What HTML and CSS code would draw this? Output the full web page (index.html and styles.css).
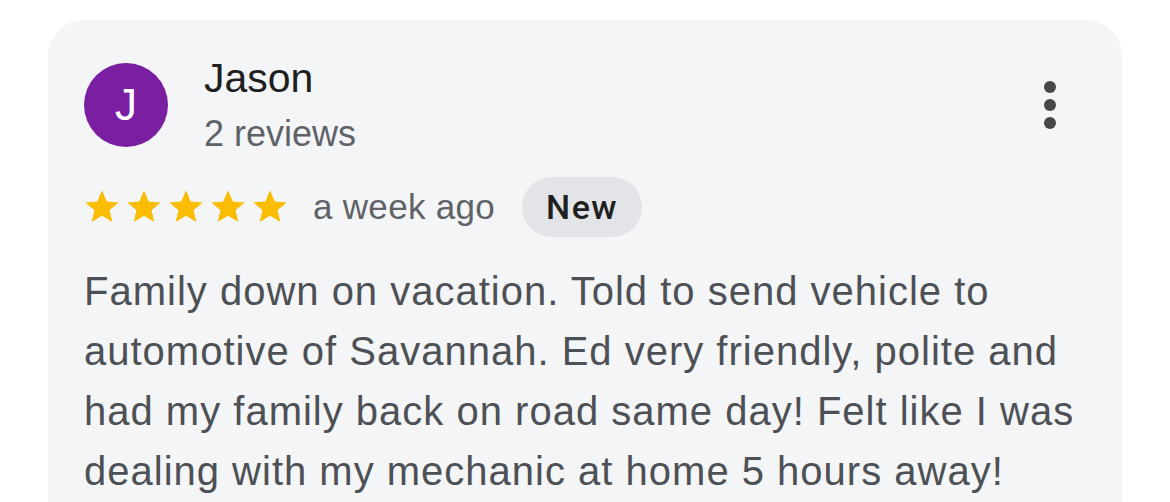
FILE: index.html
```html
<!DOCTYPE html>
<html lang="en">
<head>
<meta charset="utf-8">
<title>Review</title>
<link rel="stylesheet" href="styles.css">
</head>
<body>
<div class="card">
  <div class="header">
    <div class="avatar">J</div>
    <div class="who">
      <div class="name">Jason</div>
      <div class="count">2 reviews</div>
    </div>
    <svg class="kebab" width="24" height="48" viewBox="0 0 24 48" aria-hidden="true">
      <circle cx="12" cy="6" r="6"/>
      <circle cx="12" cy="24" r="6"/>
      <circle cx="12" cy="42" r="6"/>
    </svg>
  </div>
  <div class="meta">
    <div class="stars">
      <svg class="star" viewBox="0 0 24 24"><path d="M12 17.27L18.18 21l-1.64-7.03L22 9.24l-7.19-.61L12 2 9.19 8.63 2 9.24l5.46 4.73L5.82 21z"/></svg>
      <svg class="star" viewBox="0 0 24 24"><path d="M12 17.27L18.18 21l-1.64-7.03L22 9.24l-7.19-.61L12 2 9.19 8.63 2 9.24l5.46 4.73L5.82 21z"/></svg>
      <svg class="star" viewBox="0 0 24 24"><path d="M12 17.27L18.18 21l-1.64-7.03L22 9.24l-7.19-.61L12 2 9.19 8.63 2 9.24l5.46 4.73L5.82 21z"/></svg>
      <svg class="star" viewBox="0 0 24 24"><path d="M12 17.27L18.18 21l-1.64-7.03L22 9.24l-7.19-.61L12 2 9.19 8.63 2 9.24l5.46 4.73L5.82 21z"/></svg>
      <svg class="star" viewBox="0 0 24 24"><path d="M12 17.27L18.18 21l-1.64-7.03L22 9.24l-7.19-.61L12 2 9.19 8.63 2 9.24l5.46 4.73L5.82 21z"/></svg>
    </div>
    <span class="when">a week ago</span>
    <span class="chip">New</span>
  </div>
  <p class="text">Family down on vacation. Told to send vehicle to automotive of Savannah. Ed very friendly, polite and had my family back on road same day! Felt like I was dealing with my mechanic at home 5 hours away!</p>
</div>
</body>
</html>
```

FILE: styles.css
```css
* { box-sizing: border-box; }
html, body {
  margin: 0;
  padding: 0;
  background: #ffffff;
  overflow: hidden;
}
body {
  font-family: "Liberation Sans", Arial, sans-serif;
  height: 502px;
}
.card {
  margin: 20px 0 0 48px;
  width: 1074px;
  height: 600px;
  padding: 34px 36px 0 36px;
  background: #f4f5f7;
  border-radius: 36px 36px 0 0;
}
.header {
  display: flex;
  align-items: flex-start;
}
.avatar {
  width: 84px;
  height: 84px;
  margin-top: 9px;
  border-radius: 50%;
  background: #7b1fa2;
  color: #ffffff;
  font-size: 44px;
  line-height: 84px;
  text-align: center;
  flex: none;
}
.who {
  margin-left: 36px;
}
.name {
  font-size: 41px;
  line-height: 48px;
  color: #1f1f1f;
}
.count {
  margin-top: 10px;
  font-size: 36px;
  line-height: 44px;
  color: #5f6368;
}
.kebab {
  margin-left: auto;
  margin-right: 24px;
  margin-top: 27px;
  fill: #474747;
  flex: none;
}
.meta {
  display: flex;
  align-items: center;
  margin-top: 21px;
  height: 60px;
}
.stars {
  display: flex;
  gap: 2px;
  margin-left: -2px;
}
.star {
  width: 40px;
  height: 40px;
  fill: #fbbc04;
}
.when {
  margin-left: 23px;
  font-size: 35px;
  letter-spacing: 0.3px;
  color: #5f6368;
}
.chip {
  margin-left: 27px;
  height: 60px;
  padding: 0 24px 0 24px;
  border-radius: 30px;
  background: #e2e4e7;
  color: #1f1f1f;
  font-family: Roboto, "Liberation Sans", sans-serif;
  font-weight: 500;
  font-size: 34px;
  letter-spacing: 1.5px;
  line-height: 60px;
}
.text {
  margin: 24px 0 0 0;
  font-size: 40px;
  line-height: 60px;
  color: #4d5054;
  letter-spacing: 1px;
}
```
